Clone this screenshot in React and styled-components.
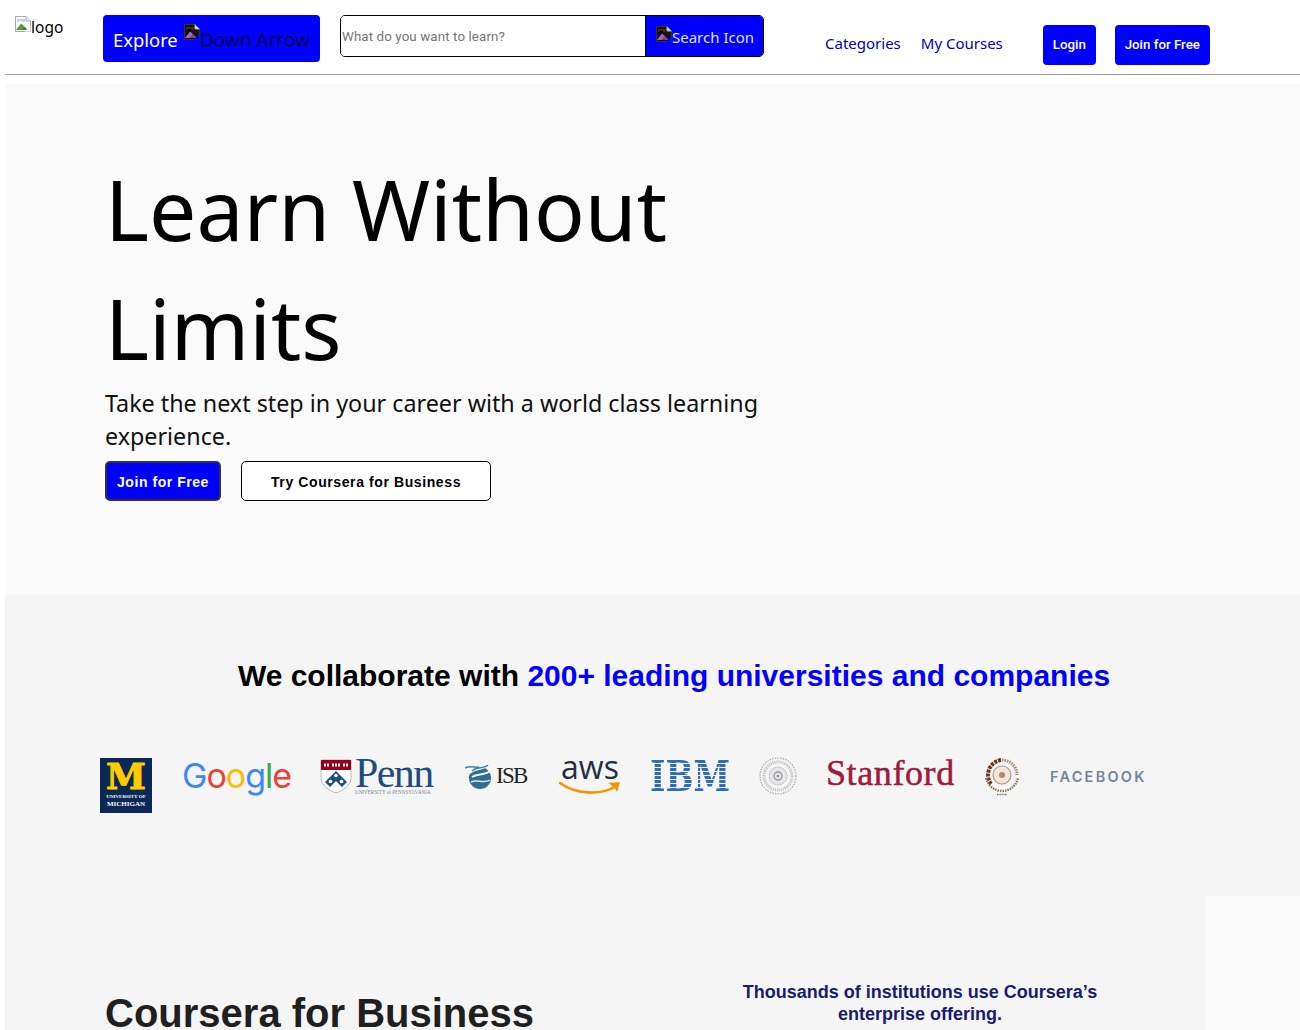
import React from 'react';
import styled, { createGlobalStyle } from 'styled-components';

const GlobalStyle = createGlobalStyle`
  html, body {
    margin: 0;
    padding: 0;
    background: #fff;
    overflow: hidden;
  }
  body {
    font-family: "Open Sans", "Noto Sans", sans-serif;
  }
`;

const Page = styled.div`
  height: 1030px;
  padding-left: 5px;
  overflow: hidden;
  box-sizing: border-box;
`;

const Header = styled.header`
  display: flex;
  align-items: flex-start;
  height: 74px;
  padding-left: 10px;
  border-bottom: 1px solid #999;
  background: #fff;
`;

const Logo = styled.div`
  display: flex;
  align-items: flex-start;
  width: 48px;
  margin-top: 16px;
  font-family: "Noto Sans", sans-serif;
  font-size: 15.5px;
  line-height: 22px;
  color: #000;
`;

const ExploreButton = styled.button`
  display: flex;
  align-items: flex-start;
  width: 217px;
  height: 47px;
  margin: 15px 0 0 40px;
  padding: 10px 0 0 10px;
  border: 0;
  border-radius: 4px;
  background: #00f;
  color: #fff;
  font-family: "Noto Sans", sans-serif;
  font-size: 18.4px;
  line-height: 30px;
  white-space: nowrap;
`;

const ArrowAlt = styled.span`
  display: flex;
  margin-left: 6px;
  color: #000050;
  font-size: 19px;
`;

const ArrowIcon = styled.span`
  display: flex;
  margin-top: -1px;
`;

const SearchBox = styled.form`
  display: flex;
  width: 424px;
  height: 42px;
  margin: 15px 0 0 20px;
  box-sizing: border-box;
  border: 1px solid #000;
  border-radius: 5px;
  overflow: hidden;
`;

const SearchInput = styled.input`
  flex: 1;
  min-width: 0;
  padding: 0 0 0 1px;
  border: 0;
  outline: 0;
  font-family: Roboto, sans-serif;
  font-size: 13.3px;
  letter-spacing: 0.12px;
  &::placeholder {
    color: #757575;
  }
`;

const SearchButton = styled.button`
  display: flex;
  align-items: flex-start;
  width: 118px;
  flex: none;
  padding: 10px 0 0 10px;
  border: 0;
  border-left: 1px solid #000;
  background: #00f;
  color: #dfe0ff;
  font-family: "Noto Sans", sans-serif;
  font-size: 15px;
  line-height: 22px;
  white-space: nowrap;
`;

const NavLink = styled.a`
  margin: 33px 0 0 ${(p) => p.$gap}px;
  color: #0000c8;
  font-family: "Noto Sans", sans-serif;
  font-size: 15px;
  line-height: 21px;
  white-space: nowrap;
`;

const NavButton = styled.button`
  width: ${(p) => p.$width}px;
  height: 40px;
  margin: 25px 0 0 ${(p) => p.$gap}px;
  padding: 0 0 2px;
  border: 0;
  border-radius: 4px;
  background: #00f;
  color: #fff;
  font-family: Roboto, sans-serif;
  font-size: 13.3px;
  font-weight: 500;
`;

const Main = styled.main`
  margin-top: 9px;
  background: #fafafa;
`;

const Hero = styled.section`
  height: 511px;
  padding: 65px 0 0 100px;
  box-sizing: border-box;
`;

const HeroTitle = styled.h1`
  width: 680px;
  margin: 0;
  font-family: "Noto Sans", sans-serif;
  font-size: 84px;
  font-weight: 400;
  line-height: 119px;
  color: #000;
`;

const HeroText = styled.p`
  width: 680px;
  margin: 0;
  font-family: "Noto Sans", sans-serif;
  font-size: 23.3px;
  line-height: 33px;
  color: #111;
`;

const HeroButtons = styled.div`
  display: flex;
  gap: 20px;
  margin-top: 8px;
`;

const PrimaryButton = styled.button`
  width: 116px;
  height: 40px;
  padding: 2px 0 0;
  box-sizing: border-box;
  border: 2px solid #333;
  border-radius: 5px;
  background: #00f;
  color: #fff;
  font-family: "Liberation Sans", sans-serif;
  font-size: 14px;
  font-weight: 700;
  letter-spacing: 0.55px;
`;

const OutlineButton = styled.button`
  width: 250px;
  height: 40px;
  padding: 1px 0 0;
  box-sizing: border-box;
  border: 1px solid #000;
  border-radius: 5px;
  background: #fff;
  color: #000;
  font-family: "Liberation Sans", sans-serif;
  font-size: 14px;
  font-weight: 700;
  letter-spacing: 0.6px;
`;

const Partners = styled.section`
  height: 301px;
  padding-top: 63px;
  box-sizing: border-box;
  background: #f5f5f5;
`;

const PartnersTitle = styled.h2`
  margin: 0;
  padding-left: 43px;
  text-align: center;
  font-family: "Liberation Sans", sans-serif;
  font-size: 30px;
  font-weight: 700;
  line-height: 36px;
  color: #000;
`;

const Highlight = styled.span`
  color: #00f;
`;

const LogoRow = styled.div`
  display: flex;
  align-items: flex-start;
  margin: 63px 0 0 95px;
`;

const LogoSlot = styled.div`
  flex: none;
  display: flex;
  align-items: center;
  width: ${(p) => p.$width}px;
  height: 38px;
  margin-left: ${(p) => p.$gap || 0}px;
`;

const Michigan = styled.div`
  align-self: flex-start;
  flex: none;
  display: flex;
  flex-direction: column;
  align-items: center;
  width: 52px;
  height: 55px;
  margin-top: 1px;
  background: #0a2756;
  color: #fff;
  font-family: "Liberation Serif", serif;
  font-weight: 700;
`;

const MichiganM = styled.span`
  margin-top: 2px;
  height: 33px;
  color: #fc0;
  font-family: "DejaVu Serif", serif;
  font-size: 36px;
  font-weight: 700;
  line-height: 33px;
  -webkit-text-stroke: 1px #fc0;
`;

const MichiganUni = styled.span`
  font-size: 5px;
  line-height: 7px;
  white-space: nowrap;
`;

const MichiganName = styled.span`
  font-size: 7px;
  line-height: 8px;
  white-space: nowrap;
`;

const GoogleWord = styled.div`
  font-family: Inter, sans-serif;
  font-size: 34px;
  font-weight: 400;
  letter-spacing: -1px;
  line-height: 38px;
`;

const Letter = styled.span`
  color: ${(p) => p.$color};
`;

const PennStack = styled.div`
  display: flex;
  flex-direction: column;
  margin-left: 3px;
  color: #1f4e7e;
  font-family: "Liberation Serif", serif;
`;

const PennWord = styled.span`
  height: 32px;
  font-size: 42px;
  line-height: 32px;
  letter-spacing: -1.6px;
`;

const PennSub = styled.span`
  font-size: 5.1px;
  line-height: 6px;
  white-space: nowrap;
  color: #6f86a0;
`;

const IsbWord = styled.span`
  margin-left: 2px;
  font-family: "Liberation Serif", serif;
  font-size: 23px;
  letter-spacing: -1.7px;
  color: #222;
`;

const AwsStack = styled.div`
  display: flex;
  flex-direction: column;
  align-items: center;
`;

const AwsWord = styled.span`
  height: 24px;
  font-family: "Open Sans", sans-serif;
  font-size: 32px;
  font-weight: 500;
  line-height: 22px;
  color: #252f3e;
`;

const IbmWord = styled.div`
  flex: none;
  width: 104px;
  height: 32px;
  font-family: "DejaVu Serif", serif;
  font-size: 43px;
  font-weight: 700;
  line-height: 32px;
  white-space: nowrap;
  color: transparent;
  background: repeating-linear-gradient(#2e6db4 0 3px, #f5f5f5 3px 4px);
  -webkit-background-clip: text;
  background-clip: text;
  transform: scaleX(0.77);
  transform-origin: left center;
`;

const StanfordWord = styled.span`
  margin-top: -7px;
  font-family: "Liberation Serif", serif;
  font-size: 36px;
  line-height: 40px;
  letter-spacing: 0.6px;
  color: #9b1c3c;
  -webkit-text-stroke: 0.5px #9b1c3c;
  white-space: nowrap;
`;

const FacebookWord = styled.span`
  font-family: Inter, sans-serif;
  font-size: 14.5px;
  font-weight: 600;
  letter-spacing: 2.25px;
  color: #73859b;
  white-space: nowrap;
`;

const Business = styled.section`
  display: flex;
  width: 1200px;
  height: 134px;
  background: #f5f5f5;
`;

const BusinessTitle = styled.h2`
  width: 590px;
  margin: 93px 0 0 100px;
  font-family: "Liberation Sans", sans-serif;
  font-size: 40px;
  font-weight: 700;
  line-height: 48px;
  color: #1f1f1f;
`;

const BusinessNote = styled.p`
  width: 380px;
  margin: 85px 0 0 35px;
  text-align: center;
  font-family: "Liberation Sans", sans-serif;
  font-size: 18px;
  font-weight: 700;
  line-height: 22px;
  color: #1a1a6e;
`;

const BrokenIcon = ({ dark }) => (
  <svg width="16" height="16" viewBox="0 0 16 16" style={{ flex: 'none' }}>
    <path d="M0.5 0.5H11L15.5 5V15.5H0.5Z" fill={dark ? '#1a1208' : '#fff'} stroke={dark ? '#333' : '#a8a8a8'} />
    <path d="M11 0.5V5H15.5" fill={dark ? '#ddd' : '#eee'} stroke={dark ? '#aaa' : '#a8a8a8'} />
    <path d="M2 3H10V6H2Z" fill={dark ? '#3a2a14' : '#bcd4f2'} />
    <path d="M1 14L6 7.5L9 10L6 14Z" fill={dark ? '#9a66cc' : '#4f9a3a'} />
    <path d="M6 14L9 10L13 14Z" fill={dark ? '#6b48a0' : '#3f7f30'} />
    <path d="M3 6L5 4.5L8 6L5 8Z" fill={dark ? '#000' : '#fff'} />
    <path d="M15.5 9.5L10 15.5H15.5Z" fill={dark ? '#00f' : '#fff'} />
  </svg>
);

const PennShield = () => (
  <svg width="32" height="35" viewBox="0 0 32 35" style={{ flex: 'none' }}>
    <path d="M1 1H31V19C31 27 22 32 16 34C10 32 1 27 1 19Z" fill="#fff" stroke="#bbb" />
    <path d="M1 1H31V11H1Z" fill="#95001a" />
    <path d="M4 6H9M12 6H20M23 6H28" stroke="#eee" strokeWidth="3" strokeDasharray="2 1" />
    <path d="M16 12L27 23L22 28L16 22L10 28L5 23Z" fill="#1f4e7e" />
    <circle cx="16" cy="16.5" r="1.8" fill="#fff" />
    <circle cx="10.5" cy="22.5" r="1.8" fill="#fff" />
    <circle cx="21.5" cy="22.5" r="1.8" fill="#fff" />
  </svg>
);

const IsbMark = () => (
  <svg width="30" height="28" viewBox="0 0 30 28" style={{ flex: 'none' }}>
    <circle cx="16" cy="16" r="11" fill="#2f6d8f" />
    <path d="M1 6C7 3 11 6 15 5M6 11C12 5 18 9 26 2M8 15C14 11 20 14 28 8" fill="none" stroke="#f5f5f5" strokeWidth="2" />
    <path d="M1 6C7 3 11 6 15 5M8 9C14 4 20 7 24 3" fill="none" stroke="#3d86ad" strokeWidth="1.4" />
    <path d="M7 20C13 17 20 22 26 18" fill="none" stroke="#d8e6ee" strokeWidth="1.4" />
  </svg>
);

const AwsSmile = () => (
  <svg width="62" height="16" viewBox="0 0 62 14">
    <path d="M1 2C16 13 42 15 57 5" fill="none" stroke="#f79400" strokeWidth="2.6" strokeLinecap="round" />
    <path d="M49 2L61 1L58 11C57 8 54 5 49 2Z" fill="#f79400" />
  </svg>
);

const Seal = () => (
  <svg width="38" height="38" viewBox="0 0 38 38">
    <circle cx="19" cy="19" r="18" fill="#f5f5f5" stroke="#aaa" strokeWidth="1.2" strokeDasharray="1.5 1.2" />
    <circle cx="19" cy="19" r="14" fill="none" stroke="#bbb" strokeWidth="3" strokeDasharray="1 1" />
    <circle cx="19" cy="19" r="9" fill="#e6e6ea" stroke="#c4c4cc" />
    <circle cx="19" cy="19" r="4" fill="none" stroke="#999" strokeWidth="1.4" />
    <circle cx="19" cy="19" r="1.2" fill="#888" />
  </svg>
);

const GearSeal = () => (
  <svg width="38" height="40" viewBox="0 0 38 40">
    <path d="M8 28A15 15 0 0 1 19 4" fill="none" stroke="#6b3a1e" strokeWidth="4" strokeDasharray="3 1" />
    <path d="M19 4A15 15 0 0 1 34 19" fill="none" stroke="#a08a70" strokeWidth="3" strokeDasharray="1.5 1" />
    <path d="M3 22C5 30 12 35 19 35C27 35 33 30 35 22" fill="none" stroke="#8a7a60" strokeWidth="2.4" strokeDasharray="1.5 1" />
    <circle cx="19" cy="19" r="9" fill="#eee6dc" stroke="#b59a7c" strokeWidth="1.2" />
    <circle cx="19" cy="19" r="3" fill="#b28866" />
    <path d="M14 38.5H24" stroke="#776" strokeWidth="1.4" strokeDasharray="1 0.6" />
  </svg>
);

const App = () => (
  <Page>
    <GlobalStyle />
    <Header>
      <Logo><BrokenIcon />logo</Logo>
      <ExploreButton type="button">
        Explore
        <ArrowAlt><ArrowIcon><BrokenIcon dark /></ArrowIcon>Down Arrow</ArrowAlt>
      </ExploreButton>
      <SearchBox>
        <SearchInput placeholder="What do you want to learn?" />
        <SearchButton type="button"><BrokenIcon dark />Search Icon</SearchButton>
      </SearchBox>
      <NavLink $gap={61}>Categories</NavLink>
      <NavLink $gap={20}>My Courses</NavLink>
      <NavButton $width={53} $gap={40}>Login</NavButton>
      <NavButton $width={95} $gap={19}>Join for Free</NavButton>
    </Header>
    <Main>
      <Hero>
        <HeroTitle>Learn Without Limits</HeroTitle>
        <HeroText>Take the next step in your career with a world class learning experience.</HeroText>
        <HeroButtons>
          <PrimaryButton>Join for Free</PrimaryButton>
          <OutlineButton>Try Coursera for Business</OutlineButton>
        </HeroButtons>
      </Hero>
      <Partners>
        <PartnersTitle>
          We collaborate with <Highlight>200+ leading universities and companies</Highlight>
        </PartnersTitle>
        <LogoRow>
          <LogoSlot $width={52}>
            <Michigan>
              <MichiganM>M</MichiganM>
              <MichiganUni>UNIVERSITY OF</MichiganUni>
              <MichiganName>MICHIGAN</MichiganName>
            </Michigan>
          </LogoSlot>
          <LogoSlot $width={108} $gap={30}>
            <GoogleWord>
              <Letter $color="#4285f4">G</Letter>
              <Letter $color="#ea4335">o</Letter>
              <Letter $color="#fbbc05">o</Letter>
              <Letter $color="#4285f4">g</Letter>
              <Letter $color="#34a853">l</Letter>
              <Letter $color="#ea4335">e</Letter>
            </GoogleWord>
          </LogoSlot>
          <LogoSlot $width={113} $gap={30}>
            <PennShield />
            <PennStack>
              <PennWord>Penn</PennWord>
              <PennSub>UNIVERSITY of PENNSYLVANIA</PennSub>
            </PennStack>
          </LogoSlot>
          <LogoSlot $width={63} $gap={31}>
            <IsbMark />
            <IsbWord>ISB</IsbWord>
          </LogoSlot>
          <LogoSlot $width={62} $gap={32}>
            <AwsStack>
              <AwsWord>aws</AwsWord>
              <AwsSmile />
            </AwsStack>
          </LogoSlot>
          <LogoSlot $width={80} $gap={29}>
            <IbmWord>IBM</IbmWord>
          </LogoSlot>
          <LogoSlot $width={38} $gap={29}>
            <Seal />
          </LogoSlot>
          <LogoSlot $width={127} $gap={29}>
            <StanfordWord>Stanford</StanfordWord>
          </LogoSlot>
          <LogoSlot $width={38} $gap={30}>
            <GearSeal />
          </LogoSlot>
          <LogoSlot $width={98} $gap={29}>
            <FacebookWord>FACEBOOK</FacebookWord>
          </LogoSlot>
        </LogoRow>
      </Partners>
      <Business>
        <BusinessTitle>Coursera for Business</BusinessTitle>
        <BusinessNote>Thousands of institutions use Coursera’s enterprise offering.</BusinessNote>
      </Business>
    </Main>
  </Page>
);

export default App;
